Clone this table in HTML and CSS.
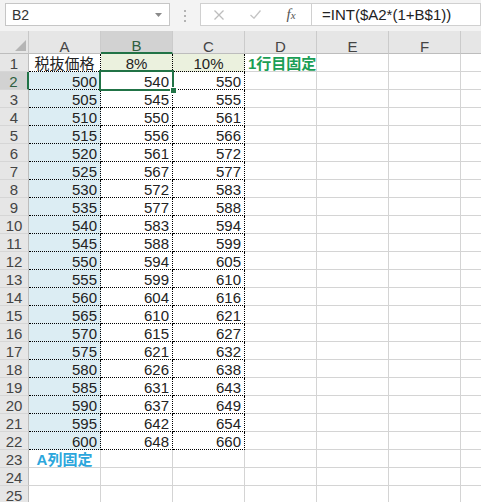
FILE: index.html
```html
<!DOCTYPE html>
<html>
<head>
	<meta charset="utf-8">
	<title>Sheet</title>
	<link rel="stylesheet" href="styles.css">
</head>
<body>
	<div class="bar">
		<div class="namebox">
			<span>B2</span>
			<svg width="7" height="4" viewBox="0 0 7 4"><path d="M0 0h7L3.5 4z" fill="#8a8a8a"/></svg>
		</div>
		<div class="grip"><i></i><i></i><i></i></div>
		<div class="btns">
			<span class="btn">
				<svg width="10" height="10" viewBox="0 0 10 10"><path d="M0.5 0.5L9.5 9.5M9.5 0.5L0.5 9.5" stroke="#bdbdbd" stroke-width="1.3"/></svg>
			</span>
			<span class="btn">
				<svg width="11" height="9" viewBox="0 0 11 9"><path d="M0.5 5L4 8.2L10.5 0.5" stroke="#c4c4c4" stroke-width="1.3" fill="none"/></svg>
			</span>
			<span class="btn fx">f<small>x</small></span>
		</div>
		<div class="formula">=INT($A2*(1+B$1))</div>
	</div>

	<div class="sheet">
		<div class="row hdr">
			<div class="corner"><svg width="11" height="11" viewBox="0 0 11 11"><path d="M11 0V11H0z" fill="#b5b5b5"/></svg></div>
			<div class="ch">A</div><div class="ch on">B</div><div class="ch">C</div><div class="ch">D</div><div class="ch">E</div><div class="ch">F</div><div class="ch last"></div>
		</div>
		<div class="row">
			<div class="rh">1</div>
			<div class="c dot mid">税抜価格</div><div class="c dot mid pct">8%</div><div class="c dot mid pct">10%</div>
			<div class="c note-row">1行目固定</div><div class="c"></div><div class="c"></div><div class="c last"></div>
		</div>
		<div class="row">
			<div class="rh on">2</div>
			<div class="c dot fixa">500</div><div class="c dot sel">540</div><div class="c dot">550</div>
			<div class="c"></div><div class="c"></div><div class="c"></div><div class="c last"></div>
		</div>
		<div class="row">
			<div class="rh">3</div>
			<div class="c dot fixa">505</div><div class="c dot">545</div><div class="c dot">555</div>
			<div class="c"></div><div class="c"></div><div class="c"></div><div class="c last"></div>
		</div>
		<div class="row">
			<div class="rh">4</div>
			<div class="c dot fixa">510</div><div class="c dot">550</div><div class="c dot">561</div>
			<div class="c"></div><div class="c"></div><div class="c"></div><div class="c last"></div>
		</div>
		<div class="row">
			<div class="rh">5</div>
			<div class="c dot fixa">515</div><div class="c dot">556</div><div class="c dot">566</div>
			<div class="c"></div><div class="c"></div><div class="c"></div><div class="c last"></div>
		</div>
		<div class="row">
			<div class="rh">6</div>
			<div class="c dot fixa">520</div><div class="c dot">561</div><div class="c dot">572</div>
			<div class="c"></div><div class="c"></div><div class="c"></div><div class="c last"></div>
		</div>
		<div class="row">
			<div class="rh">7</div>
			<div class="c dot fixa">525</div><div class="c dot">567</div><div class="c dot">577</div>
			<div class="c"></div><div class="c"></div><div class="c"></div><div class="c last"></div>
		</div>
		<div class="row">
			<div class="rh">8</div>
			<div class="c dot fixa">530</div><div class="c dot">572</div><div class="c dot">583</div>
			<div class="c"></div><div class="c"></div><div class="c"></div><div class="c last"></div>
		</div>
		<div class="row">
			<div class="rh">9</div>
			<div class="c dot fixa">535</div><div class="c dot">577</div><div class="c dot">588</div>
			<div class="c"></div><div class="c"></div><div class="c"></div><div class="c last"></div>
		</div>
		<div class="row">
			<div class="rh">10</div>
			<div class="c dot fixa">540</div><div class="c dot">583</div><div class="c dot">594</div>
			<div class="c"></div><div class="c"></div><div class="c"></div><div class="c last"></div>
		</div>
		<div class="row">
			<div class="rh">11</div>
			<div class="c dot fixa">545</div><div class="c dot">588</div><div class="c dot">599</div>
			<div class="c"></div><div class="c"></div><div class="c"></div><div class="c last"></div>
		</div>
		<div class="row">
			<div class="rh">12</div>
			<div class="c dot fixa">550</div><div class="c dot">594</div><div class="c dot">605</div>
			<div class="c"></div><div class="c"></div><div class="c"></div><div class="c last"></div>
		</div>
		<div class="row">
			<div class="rh">13</div>
			<div class="c dot fixa">555</div><div class="c dot">599</div><div class="c dot">610</div>
			<div class="c"></div><div class="c"></div><div class="c"></div><div class="c last"></div>
		</div>
		<div class="row">
			<div class="rh">14</div>
			<div class="c dot fixa">560</div><div class="c dot">604</div><div class="c dot">616</div>
			<div class="c"></div><div class="c"></div><div class="c"></div><div class="c last"></div>
		</div>
		<div class="row">
			<div class="rh">15</div>
			<div class="c dot fixa">565</div><div class="c dot">610</div><div class="c dot">621</div>
			<div class="c"></div><div class="c"></div><div class="c"></div><div class="c last"></div>
		</div>
		<div class="row">
			<div class="rh">16</div>
			<div class="c dot fixa">570</div><div class="c dot">615</div><div class="c dot">627</div>
			<div class="c"></div><div class="c"></div><div class="c"></div><div class="c last"></div>
		</div>
		<div class="row">
			<div class="rh">17</div>
			<div class="c dot fixa">575</div><div class="c dot">621</div><div class="c dot">632</div>
			<div class="c"></div><div class="c"></div><div class="c"></div><div class="c last"></div>
		</div>
		<div class="row">
			<div class="rh">18</div>
			<div class="c dot fixa">580</div><div class="c dot">626</div><div class="c dot">638</div>
			<div class="c"></div><div class="c"></div><div class="c"></div><div class="c last"></div>
		</div>
		<div class="row">
			<div class="rh">19</div>
			<div class="c dot fixa">585</div><div class="c dot">631</div><div class="c dot">643</div>
			<div class="c"></div><div class="c"></div><div class="c"></div><div class="c last"></div>
		</div>
		<div class="row">
			<div class="rh">20</div>
			<div class="c dot fixa">590</div><div class="c dot">637</div><div class="c dot">649</div>
			<div class="c"></div><div class="c"></div><div class="c"></div><div class="c last"></div>
		</div>
		<div class="row">
			<div class="rh">21</div>
			<div class="c dot fixa">595</div><div class="c dot">642</div><div class="c dot">654</div>
			<div class="c"></div><div class="c"></div><div class="c"></div><div class="c last"></div>
		</div>
		<div class="row">
			<div class="rh">22</div>
			<div class="c dot fixa">600</div><div class="c dot">648</div><div class="c dot">660</div>
			<div class="c"></div><div class="c"></div><div class="c"></div><div class="c last"></div>
		</div>
		<div class="row">
			<div class="rh">23</div>
			<div class="c mid note-col">A列固定</div><div class="c"></div><div class="c"></div>
			<div class="c"></div><div class="c"></div><div class="c"></div><div class="c last"></div>
		</div>
		<div class="row">
			<div class="rh">24</div>
			<div class="c"></div><div class="c"></div><div class="c"></div>
			<div class="c"></div><div class="c"></div><div class="c"></div><div class="c last"></div>
		</div>
		<div class="row">
			<div class="rh">25</div>
			<div class="c"></div><div class="c"></div><div class="c"></div>
			<div class="c"></div><div class="c"></div><div class="c"></div><div class="c last"></div>
		</div>
	</div>
</body>
</html>
```

FILE: styles.css
```css
html, body {
	margin: 0;
	padding: 0;
	width: 481px;
	height: 502px;
	overflow: hidden;
	background: #fff;
	font-family: "Liberation Sans", "Noto Sans CJK JP", sans-serif;
	color: #222;
}

/* formula bar */
.bar {
	height: 31px;
	box-sizing: border-box;
	padding-top: 3px;
	display: flex;
	align-items: flex-start;
	background: #f3f3f3;
}
.namebox {
	margin-left: 5px;
	width: 165px;
	height: 23px;
	box-sizing: border-box;
	border: 1px solid #c6c6c6;
	background: #fff;
	display: flex;
	align-items: center;
	justify-content: space-between;
	padding: 0 7px 0 6px;
	font-size: 14px;
	color: #333;
}
.grip {
	width: 30px;
	display: flex;
	flex-direction: column;
	align-items: center;
	gap: 3px;
	padding-top: 7px;
}
.grip i {
	width: 2px;
	height: 2px;
	background: #b3b3b3;
}
.btns {
	width: 112px;
	height: 23px;
	box-sizing: border-box;
	border: 1px solid #d0d0d0;
	background: #fff;
	display: flex;
	align-items: center;
}
.btn {
	width: 36px;
	display: flex;
	justify-content: center;
	align-items: center;
}
.fx {
	font-family: "Liberation Serif", serif;
	font-style: italic;
	font-size: 15px;
	color: #555;
}
.fx small {
	font-size: 11px;
}
.formula {
	flex: 1;
	height: 23px;
	box-sizing: border-box;
	border: 1px solid #d0d0d0;
	border-left: 0;
	background: #fff;
	padding-left: 10px;
	font-size: 15px;
	line-height: 21px;
	color: #222;
	white-space: nowrap;
}

/* sheet grid */
.row {
	display: grid;
	grid-template-columns: 29px repeat(6, 72px) 1fr;
	height: 18px;
}
.row.hdr {
	height: 23px;
}
.row > div {
	box-sizing: border-box;
	display: flex;
	align-items: flex-end;
	line-height: 12px;
	font-size: 15px;
	white-space: nowrap;
}
.corner {
	background: #e6e6e6;
	border-right: 1px solid #c8c8c8;
	border-bottom: 1px solid #bdbdbd;
	justify-content: flex-end;
	padding: 0 2px 2px 0;
}
.ch {
	background: #e6e6e6;
	border-right: 1px solid #cbcbcb;
	border-bottom: 1px solid #bdbdbd;
	justify-content: center;
	color: #444;
}
.ch.on {
	background: #d2d2d2;
	border-bottom: 2px solid #217346;
	color: #2f5f40;
}
.rh {
	background: #e6e6e6;
	border-right: 1px solid #bdbdbd;
	border-bottom: 1px solid #d6d6d6;
	justify-content: center;
	padding-bottom: 1px;
	color: #444;
}
.rh.on {
	background: #d2d2d2;
	border-right: 2px solid #217346;
	color: #2f5f40;
}
.c {
	border-right: 1px solid #d4d4d4;
	border-bottom: 1px solid #d4d4d4;
	justify-content: flex-end;
	padding: 0 3px 1px 0;
	color: #222;
}
.c.last, .ch.last {
	border-right: 0;
}
.c.dot {
	border-right: 1px dotted #000;
	border-bottom: 1px dotted #000;
}
.c.mid {
	justify-content: center;
	padding-right: 0;
}
.pct {
	background: #ebf1de;
}
.fixa {
	background: #dcedf3;
}
.sel {
	position: relative;
}
.sel::after {
	content: "";
	position: absolute;
	left: -2px;
	top: -2px;
	right: -2px;
	bottom: -2px;
	border: 2px solid #217346;
}
.sel::before {
	content: "";
	position: absolute;
	right: -5px;
	bottom: -5px;
	width: 5px;
	height: 5px;
	background: #217346;
	border: 1px solid #fff;
	z-index: 1;
}
.note-row {
	justify-content: flex-start;
	padding: 0 0 1px 3px;
	font-weight: bold;
	color: #1a9e55;
	overflow: visible;
}
.note-col {
	font-weight: bold;
	color: #2ca6dc;
}
```
